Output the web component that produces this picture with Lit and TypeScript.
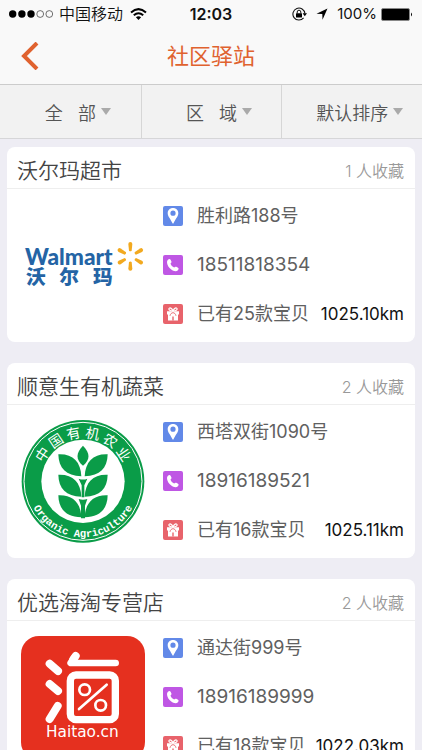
import { LitElement, html, css, svg, TemplateResult } from "lit";
import { customElement, property } from "lit/decorators.js";

interface Shop {
  name: string;
  fans: number;
  address: string;
  phone: string;
  goods: number;
  distance: string;
  logo: TemplateResult;
}

const leafPair = (y: number) => svg`
  <path d="M145 ${y} C188 ${y - 2} 212 ${y + 22} 214 ${y + 66} C168 ${y + 64} 146 ${y + 42} 145 ${y} Z"/>
  <path d="M293 ${y} C250 ${y - 2} 226 ${y + 22} 224 ${y + 66} C270 ${y + 64} 292 ${y + 42} 293 ${y} Z"/>`;

const ray = (angle: number) => svg`
  <path transform="rotate(${angle} 391 169)" d="M387 152 L385 132 Q385 126 391 126 Q397 126 397 132 L395 152 Q391 155 387 152 Z"/>`;

const walmartLogo = html`
  <svg viewBox="63 12 372 372" role="img" aria-label="Walmart 沃尔玛">
    <g fill="#2464a5">
      <text x="75" y="194" font-family="Lato, sans-serif" font-weight="900" font-size="68">Walmart</text>
      <g font-family="Noto Sans CJK SC, sans-serif" font-weight="900" font-size="59">
        <text x="78" y="252">沃</text>
        <text x="178" y="252">尔</text>
        <text x="279" y="252">玛</text>
      </g>
    </g>
    <g fill="#f2a91f">${[0, 60, 120, 180, 240, 300].map(ray)}</g>
  </svg>`;

const organicLogo = html`
  <svg viewBox="33 30 372 372" role="img" aria-label="中国有机农业 Organic Agriculture">
    <defs>
      <path id="upper" d="M88 214 A131 131 0 0 1 350 214"/>
      <path id="lower" d="M51 214 A168 168 0 0 0 387 214"/>
    </defs>
    <circle cx="219" cy="214" r="184" fill="#0a9c48"/>
    <circle cx="219" cy="214" r="177" fill="none" stroke="#fff" stroke-width="3"/>
    <circle cx="219" cy="214" r="125" fill="#fff"/>
    <g fill="#fff">
      <text font-family="Noto Sans CJK SC, sans-serif" font-weight="400" font-size="42" text-anchor="middle">
        <textPath href="#upper" startOffset="50%">中 国 有 机 农 业</textPath>
      </text>
      <text font-family="Liberation Mono, monospace" font-weight="700" font-size="32" text-anchor="middle">
        <textPath href="#lower" startOffset="50%">Organic Agriculture</textPath>
      </text>
    </g>
    <g fill="#0a9c48">
      <path d="M219 107 C241 130 241 148 219 167 C197 148 197 130 219 107 Z"/>
      ${leafPair(133)}${leafPair(194)}${leafPair(256)}
      <path d="M206 206 Q219 211 232 206 L223 226 V262 H215 V226 Z M206 267 Q219 272 232 267 L225 287 V325 H213 V287 Z"/>
    </g>
  </svg>`;

const haitaoLogo = html`
  <svg viewBox="33 198 372 372" role="img" aria-label="Haitao.cn">
    <rect x="33" y="198" width="372" height="372" rx="54" fill="#e5301f"/>
    <g fill="none" stroke="#fff" stroke-linecap="round" stroke-linejoin="round">
      <g stroke-width="24">
        <path d="M119 281 L144 303 M119 342 L144 363 M143 408 L119 447"/>
      </g>
      <path stroke-width="20" d="M197 257 L182 279 H317"/>
      <path stroke-width="24" d="M197 258 L190 268"/>
      <rect x="181" y="315" width="135" height="134" rx="17" stroke-width="22"/>
      <g stroke-width="8">
        <path d="M207 417 L290 344"/>
        <circle cx="224" cy="359" r="16"/>
        <circle cx="272" cy="406" r="16"/>
      </g>
    </g>
    <text x="217" y="500" fill="#fff" text-anchor="middle" font-family="DejaVu Sans, sans-serif" font-weight="400" font-size="46">Haitao.cn</text>
  </svg>`;

const pinIcon = html`
  <svg class="icon" viewBox="0 0 20 20" aria-hidden="true">
    <rect width="20" height="20" rx="2" fill="#6289e8"/>
    <path fill="#fff" fill-rule="evenodd" d="M10 2 C6.900 2 4.700 4.200 4.700 7.200 C4.700 10.500 8 13.500 9.500 17.300 Q10 18.200 10.500 17.300 C12 13.500 15.300 10.500 15.300 7.200 C15.300 4.200 13.100 2 10 2 Z M10 4.600 A2.600 2.600 0 1 1 10 9.800 A2.600 2.600 0 1 1 10 4.600 Z"/>
  </svg>`;

const phoneIcon = html`
  <svg class="icon" viewBox="0 0 20 20" aria-hidden="true">
    <rect width="20" height="20" rx="2" fill="#bf57e4"/>
    <path fill="#fff" d="M5 4.700 C6 3.700 7 3.800 7.600 4.800 L8.400 6.500 C8.800 7.400 8.300 7.900 7.500 8.600 C7.900 10.200 9.500 12 11.200 12.600 C11.900 11.700 12.500 11.400 13.300 11.800 L15 12.800 C15.900 13.400 15.700 14.300 14.900 15.200 C13.500 16.800 10.500 16.300 8.300 14.600 C5.800 12.700 3.900 9.800 4 7 C4 6 4.400 5.200 5 4.700 Z"/>
  </svg>`;

const giftIcon = html`
  <svg class="icon" viewBox="0 0 20 20" aria-hidden="true">
    <rect width="20" height="20" rx="2" fill="#e8636b"/>
    <path fill="none" stroke="#fff" stroke-width="1.200" d="M10 7 C7 7 5.600 6 5.900 4.700 C6.400 3.200 9 4 10 7 C11 4 13.600 3.200 14.100 4.700 C14.400 6 13 7 10 7"/>
    <path fill="#fff" d="M4 7.300 H16 V10.400 H4 Z M5 10.400 H15 V16.500 H5 Z"/>
    <path fill="none" stroke="#e8636b" stroke-width="0.900" d="M7 11.800 C7.400 9.800 8.600 8.800 10 8.700 C11.400 8.800 12.600 9.800 13 11.800"/>
    <path fill="#e8636b" d="M9.300 12.600 H10.700 V16.500 H9.300 Z"/>
  </svg>`;

const shops: Shop[] = [
  { name: "沃尔玛超市", fans: 1, address: "胜利路188号", phone: "18511818354", goods: 25, distance: "1025.10km", logo: walmartLogo },
  { name: "顺意生有机蔬菜", fans: 2, address: "西塔双街1090号", phone: "18916189521", goods: 16, distance: "1025.11km", logo: organicLogo },
  { name: "优选海淘专营店", fans: 2, address: "通达街999号", phone: "18916189999", goods: 18, distance: "1022.03km", logo: haitaoLogo },
];

@customElement("status-bar")
class StatusBar extends LitElement {
  static styles = css`
    :host {
      display: grid;
      grid-template-columns: 1fr auto 1fr;
      align-items: center;
      height: 28px;
      padding: 0 9px;
      font-size: 16px;
      line-height: 20px;
      color: #111;
    }
    .side { display: flex; align-items: center; }
    .carrier { margin: 0 7px 0 6px; }
    .end { justify-content: flex-end; }
    .time { font-weight: 600; }
    .lock { margin-right: 9px; }
    .arrow { margin-right: 9px; }
    .percent { margin-right: 4px; font-size: 15px; font-weight: 400; }
    svg { display: block; flex: none; }
  `;

  render() {
    return html`
      <div class="side">
        <svg width="44" height="8" viewBox="0 0 44 8" aria-hidden="true">
          <g fill="#000"><circle cx="3.700" cy="4" r="3.700"/><circle cx="12.900" cy="4" r="3.700"/><circle cx="22" cy="4" r="3.700"/></g>
          <g fill="none" stroke="#333" stroke-width="0.700"><circle cx="31.200" cy="4" r="3.400"/><circle cx="40.300" cy="4" r="3.400"/></g>
        </svg>
        <span class="carrier">中国移动</span>
        <svg width="17" height="12" viewBox="0 0 17 12" aria-hidden="true">
          <g fill="none" stroke="#000" stroke-width="2"><path d="M1 4.400 Q8.500 -2.200 16 4.400"/><path d="M3.800 7.300 Q8.500 3.200 13.200 7.300"/></g>
          <path d="M5.900 9.300 Q8.500 7.200 11.100 9.300 L8.500 12 Z"/>
        </svg>
      </div>
      <span class="time">12:03</span>
      <div class="side end">
        <svg class="lock" width="15" height="14" viewBox="0 0 15 14" aria-hidden="true">
          <path d="M11.600 10.800 A6 6 0 1 1 12.900 6.500" fill="none" stroke="#111" stroke-width="1.100"/>
          <path d="M10.600 6.300 H15 L12.800 9.200 Z"/>
          <rect x="4" y="6.200" width="6" height="4.300" rx="0.500"/>
          <path d="M5.200 6.500 V5 A1.800 1.800 0 0 1 8.800 5 V6.500" fill="none" stroke="#111" stroke-width="1"/>
        </svg>
        <svg class="arrow" width="12" height="12" viewBox="0 0 11 12" aria-hidden="true"><path d="M11 0.500 L6 11.800 L5.800 6 L0 5.700 Z"/></svg>
        <span class="percent">100%</span>
        <svg width="32" height="13" viewBox="0 0 32 13" aria-hidden="true">
          <rect x="0.500" y="0.500" width="28" height="12" rx="1.500" fill="#000" stroke="#888"/>
          <path d="M30 4.500 Q32 6.500 30 8.500 Z"/>
        </svg>
      </div>`;
  }
}

@customElement("filter-select")
class FilterSelect extends LitElement {
  @property() label = "";
  @property({ attribute: false }) options: string[] = [];

  static styles = css`
    :host { display: flex; align-items: center; justify-content: center; }
    .field { position: relative; display: block; }
    .field::after {
      content: "";
      position: absolute;
      left: 100%;
      top: 8px;
      margin-left: 5px;
      border: 5px solid transparent;
      border-top: 7px solid #aaa;
      border-bottom: 0;
      pointer-events: none;
    }
    .select {
      display: block;
      appearance: none;
      border: 0;
      margin: 0;
      padding: 0;
      background: none;
      font: inherit;
      font-size: 18px;
      line-height: 28px;
      color: #555;
      field-sizing: content;
    }
  `;

  render() {
    return html`
      <label class="field">
        <select class="select" aria-label=${this.label}>
          ${this.options.map((option) => html`<option>${option}</option>`)}
        </select>
      </label>`;
  }
}

@customElement("shop-card")
class ShopCard extends LitElement {
  @property({ attribute: false }) shop!: Shop;

  static styles = css`
    :host { display: block; background: #fff; border-radius: 8px; color: #606060; }
    .head {
      display: flex;
      align-items: center;
      justify-content: space-between;
      height: 41px;
      padding: 0 11px 0 10px;
      border-bottom: 1px solid #eee;
    }
    .name { margin: 0; padding-top: 6px; font-size: 21px; line-height: 32px; font-weight: inherit; color: #444; }
    .fans { padding-top: 6px; font-size: 16px; line-height: 24px; color: #999; }
    .body { display: flex; gap: 18px; padding: 15px 11px 14px 14px; }
    .logo { flex: none; width: 124px; height: 124px; }
    .logo svg { display: block; width: 100%; height: 100%; }
    .facts { flex: 1; display: grid; align-content: start; gap: 29px; padding-top: 2px; font-size: 18px; line-height: 20px; font-weight: 400; }
    .fact { display: flex; align-items: center; height: 20px; white-space: nowrap; }
    .icon { display: block; flex: none; width: 20px; height: 20px; margin-right: 14px; }
    .phone { font-size: 19px; color: inherit; text-decoration: none; }
    .distance { margin-left: auto; font-size: 17px; color: #111; }
  `;

  render() {
    const { name, fans, address, phone, goods, distance, logo } = this.shop;
    return html`
      <header class="head">
        <h2 class="name">${name}</h2>
        <span class="fans">${fans} 人收藏</span>
      </header>
      <div class="body">
        <div class="logo">${logo}</div>
        <div class="facts">
          <div class="fact">${pinIcon}<span>${address}</span></div>
          <div class="fact">${phoneIcon}<a class="phone" href="tel:${phone}">${phone}</a></div>
          <div class="fact">${giftIcon}<span>已有${goods}款宝贝</span><span class="distance">${distance}</span></div>
        </div>
      </div>`;
  }
}

@customElement("app-root")
class AppRoot extends LitElement {
  static styles = css`
    :host {
      display: flex;
      flex-direction: column;
      height: 100vh;
      background: #eeedf4;
      font-family: Inter, "Noto Sans CJK SC", sans-serif;
      font-weight: 350;
    }
    .top { flex: none; background: #f9f9f9; }
    .nav {
      display: grid;
      grid-template-columns: 60px 1fr 60px;
      align-items: center;
      height: 56px;
    }
    .back { border: 0; margin: 0; padding: 0 0 0 20px; background: none; cursor: pointer; }
    .back svg { display: block; }
    .title { margin: 0; text-align: center; font-size: 22px; line-height: 32px; font-weight: 400; color: #e0622f; }
    .filters {
      flex: none;
      display: grid;
      grid-template-columns: repeat(3, 1fr);
      height: 53px;
      background: #f2f2f2;
      border-top: 1px solid #ccc;
      border-bottom: 1px solid #d6d6d8;
    }
    .filter { padding-top: 4px; }
    .filter + .filter { border-left: 1px solid #d6d6d6; }
    .list {
      flex: 1;
      min-height: 0;
      overflow-y: auto;
      scrollbar-width: none;
      display: flex;
      flex-direction: column;
      gap: 21px;
      padding: 8px 7px;
    }
    .card { flex: none; }
  `;

  render() {
    return html`
      <div class="top">
        <status-bar></status-bar>
        <nav class="nav">
          <button class="back" aria-label="返回">
            <svg width="20" height="28" viewBox="0 0 20 28"><path d="M17 1 L4 14 L17 27" fill="none" stroke="#e0622f" stroke-width="4"/></svg>
          </button>
          <h1 class="title">社区驿站</h1>
        </nav>
      </div>
      <div class="filters">
        <filter-select class="filter" label="分类" .options=${["全\u00a0\u00a0\u00a0部"]}></filter-select>
        <filter-select class="filter" label="区域" .options=${["区\u00a0\u00a0\u00a0域"]}></filter-select>
        <filter-select class="filter" label="排序" .options=${["默认排序"]}></filter-select>
      </div>
      <main class="list">
        ${shops.map((shop) => html`<shop-card class="card" .shop=${shop}></shop-card>`)}
      </main>`;
  }
}
